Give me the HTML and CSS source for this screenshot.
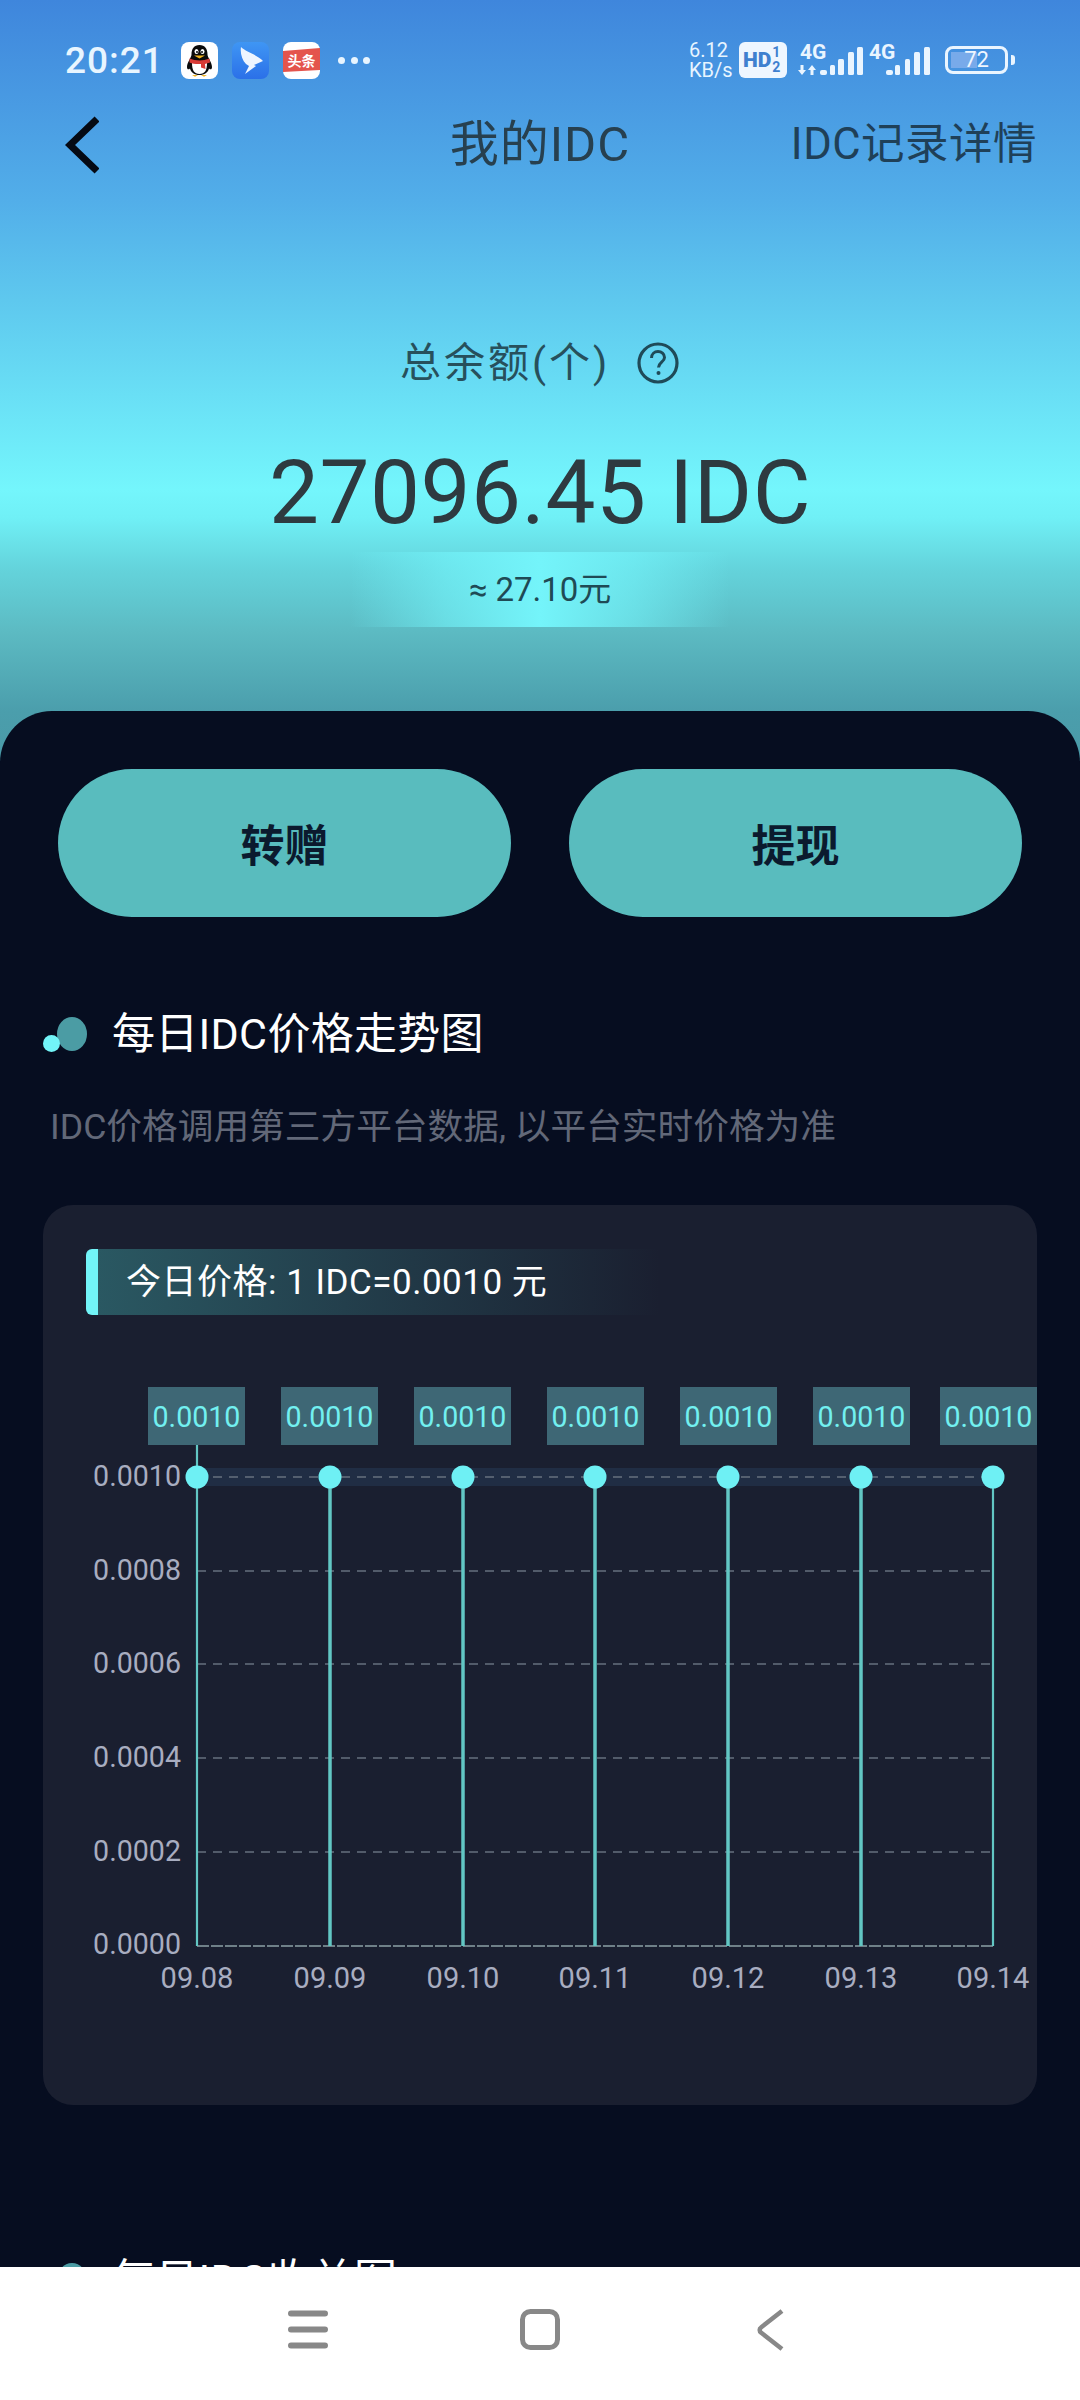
FILE: index.html
```html
<!DOCTYPE html>
<html lang="zh-CN">
<head>
<meta charset="utf-8">
<title>我的IDC</title>
<link rel="stylesheet" href="styles.css">
</head>
<body>
<div class="screen">
  <header class="hero">
    <div class="status">
      <div class="status-left">
        <span class="time">20:21</span>
        <svg class="app" viewBox="0 0 37 37"><rect width="37" height="37" rx="8" fill="#fff"/><path d="M18.500 3c-5.500 0-8 4-8 9.500 0 3-4.500 8-4.500 12.500 0 2.500 1.500 3 3 1.500 1 4 4.500 6.500 9.500 6.500s8.500-2.500 9.500-6.500c1.500 1.500 3 1 3-1.500 0-4.500-4.500-9.500-4.500-12.500 0-5.500-2.500-9.500-8-9.500z" fill="#0b0b0b"/><path d="M11 21c0 7 2 11 7.500 11s7.500-4 7.500-11z" fill="#fff"/><path d="M8.500 16.500c6.500 2.500 13.500 2.500 20 0l.5 4-5 1.500.5 5-4.500-1.500v-3.500c-4 .3-8 0-11.500-1.500z" fill="#d83a35"/><ellipse cx="15.500" cy="9.500" rx="2" ry="2.500" fill="#fff"/><ellipse cx="21.500" cy="9.500" rx="2" ry="2.500" fill="#fff"/><circle cx="16" cy="10" r="1" fill="#0b0b0b"/><circle cx="21" cy="10" r="1" fill="#0b0b0b"/><path d="M13 13.500h11l-5.500 3z" fill="#f2b51d"/><path d="M11 33h6l-3 1.800zM20 33h6l-3 1.800z" fill="#f2b51d"/></svg>
        <svg class="app" viewBox="0 0 37 37"><defs><linearGradient id="ding" x1="0" y1="0" x2="0" y2="1"><stop offset="0" stop-color="#3f96f4"/><stop offset="1" stop-color="#2b70e8"/></linearGradient></defs><rect width="37" height="37" rx="8" fill="url(#ding)"/><path d="M9 5C14 10 26 13 31 19L22 23l2 1L13 32l4-8-3-2C10 18 8 11 9 5z" fill="#eef5ff"/></svg>
        <svg class="app" viewBox="0 0 37 37"><rect width="37" height="37" rx="8" fill="#fff"/><path d="M0 9 37 6v22L0 30z" fill="#e4544d"/><text x="18.500" y="24" class="app-text">头条</text></svg>
        <span class="dots"><i></i><i></i><i></i></span>
      </div>
      <div class="status-right">
        <span class="speed"><b>6.12</b><b>KB/s</b></span>
        <span class="hd">HD<span class="hd-sims"><b>1</b><b>2</b></span></span>
        <svg class="signal sig1" viewBox="0 0 66 32"><text x="2" y="15" class="sig-text">4G</text><path d="M2.500 21h3v5H8l-4 5-4-5h2.500zM14 21l4 5h-2.500v5h-3v-5H10z" fill="#eaf5ff"/><rect x="22" y="26" width="7" height="5" rx="2" fill="#eaf5ff"/><rect x="32" y="21" width="5" height="10" rx="1.500" fill="#eaf5ff"/><rect x="40" y="15" width="6" height="16" rx="1.500" fill="#eaf5ff"/><rect x="50" y="8" width="6" height="23" rx="1.500" fill="#eaf5ff"/><rect x="59" y="3" width="6" height="28" rx="1.500" fill="#eaf5ff"/></svg>
        <svg class="signal sig2" viewBox="0 0 62 32"><text x="0" y="15" class="sig-text">4G</text><rect x="17" y="26" width="7" height="5" rx="2" fill="#eaf5ff"/><rect x="26" y="21" width="5" height="10" rx="1.500" fill="#eaf5ff"/><rect x="36" y="15" width="5" height="16" rx="1.500" fill="#eaf5ff"/><rect x="45" y="8" width="6" height="23" rx="1.500" fill="#eaf5ff"/><rect x="55" y="3" width="6" height="28" rx="1.500" fill="#eaf5ff"/></svg>
        <span class="battery"><span class="battery-fill"></span><span class="battery-num">72</span></span>
        <span class="battery-tip"></span>
      </div>
    </div>
    <nav class="topbar">
      <svg class="back" viewBox="0 0 34 58"><path d="M32 3 5 29l27 26" fill="none" stroke="#050a14" stroke-width="7"/></svg>
      <h1 class="page-title">我的IDC</h1>
      <a class="record-link">IDC记录详情</a>
    </nav>
    <div class="balance-label">
      <span>总余额(个)</span>
      <svg class="help" viewBox="0 0 42 42"><circle cx="21" cy="21" r="19" fill="none" stroke="#1f4a58" stroke-width="3.200"/><path d="M14.500 16c0-4 3-6.500 6.500-6.500s6.500 2.500 6.500 6c0 4.500-6 5-6 10" fill="none" stroke="#1f4a58" stroke-width="3"/><circle cx="21.500" cy="31" r="2" fill="#1f4a58"/></svg>
    </div>
    <div class="balance">27096.45 IDC</div>
    <div class="approx">≈ 27.10元</div>
  </header>

  <main class="panel">
    <div class="actions">
      <button class="action">转赠</button>
      <button class="action">提现</button>
    </div>

    <h2 class="section-title"><span class="blob"><i></i></span>每日IDC价格走势图</h2>
    <p class="section-note">IDC价格调用第三方平台数据, 以平台实时价格为准</p>

    <section class="card">
      <div class="today"><span class="today-text">今日价格: 1 IDC=0.0010 元</span></div>
      <svg class="chart" viewBox="0 27 994 703" width="994" height="703">
        <rect class="band" x="154" y="180" width="796" height="18"/>
        <g class="grid">
          <path d="M154 189H950M154 283H950M154 376H950M154 470H950M154 564H950"/>
        </g>
        <path class="axis" d="M154 658H950"/>
        <g class="stems">
          <path class="stem-edge" d="M154 150V658"/>
          <path d="M287 189V658M420 189V658M552 189V658M685 189V658M818 189V658"/>
          <path class="stem-edge" d="M950 189V658"/>
        </g>
        <g class="points">
          <circle cx="154" cy="189" r="11.500"/><circle cx="287" cy="189" r="11.500"/><circle cx="420" cy="189" r="11.500"/><circle cx="552" cy="189" r="11.500"/><circle cx="685" cy="189" r="11.500"/><circle cx="818" cy="189" r="11.500"/><circle cx="950" cy="189" r="11.500"/>
        </g>
        <g class="tips">
          <rect x="105" y="99" width="97" height="58"/><rect x="238" y="99" width="97" height="58"/><rect x="371" y="99" width="97" height="58"/><rect x="504" y="99" width="97" height="58"/><rect x="637" y="99" width="97" height="58"/><rect x="770" y="99" width="97" height="58"/><rect x="897" y="99" width="97" height="58"/>
        </g>
        <g class="tip-text">
          <text x="153.500" y="139">0.0010</text><text x="286.500" y="139">0.0010</text><text x="419.500" y="139">0.0010</text><text x="552.500" y="139">0.0010</text><text x="685.500" y="139">0.0010</text><text x="818.500" y="139">0.0010</text><text x="945.500" y="139">0.0010</text>
        </g>
        <g class="y-labels">
          <text x="138" y="198">0.0010</text><text x="138" y="292">0.0008</text><text x="138" y="385">0.0006</text><text x="138" y="479">0.0004</text><text x="138" y="573">0.0002</text><text x="138" y="666">0.0000</text>
        </g>
        <g class="x-labels">
          <text x="154" y="700">09.08</text><text x="287" y="700">09.09</text><text x="420" y="700">09.10</text><text x="552" y="700">09.11</text><text x="685" y="700">09.12</text><text x="818" y="700">09.13</text><text x="950" y="700">09.14</text>
        </g>
      </svg>
    </section>

    <h2 class="section-title next"><span class="blob"><i></i></span>每日IDC收益图</h2>
  </main>

  <footer class="navbar">
    <svg class="nav-icon" viewBox="0 0 40 41"><path d="M3 4.500H37M3 20.500H37M3 36.500H37" fill="none" stroke="#888" stroke-width="6" stroke-linecap="round"/></svg>
    <svg class="nav-icon" viewBox="0 0 40 41"><rect x="2.500" y="2.500" width="35" height="36" rx="8" fill="none" stroke="#888" stroke-width="5"/></svg>
    <svg class="nav-back" viewBox="0 0 28 42"><path d="M25 2 4 18.500a3 3 0 0 0 0 5L25 40" fill="none" stroke="#888" stroke-width="4.500"/></svg>
  </footer>
</div>
</body>
</html>
```
FILE: styles.css
```css
* { box-sizing: border-box; }
html, body { margin: 0; padding: 0; }
body {
  width: 1080px;
  height: 2400px;
  overflow: hidden;
  font-family: Roboto, "Noto Sans CJK SC", sans-serif;
}
.screen {
  position: relative;
  width: 1080px;
  height: 2400px;
  display: flex;
  flex-direction: column;
  overflow: hidden;
  background: #060d20;
}

/* Hero */
.hero {
  height: 761px;
  flex: none;
  padding: 0 43px 0 65px;
  display: flex;
  flex-direction: column;
  background: linear-gradient(180deg, #3f86dc 0, #52aee9 200px, #5ec8ee 300px, #74f6fc 490px, #70f0f6 517px, #64d4dc 567px, #5cbac2 633px, #4b9eac 711px, #4a9aa8 761px);
}
.status {
  height: 80px;
  padding: 40px 22px 0 0;
  display: flex;
  justify-content: space-between;
  align-items: center;
  flex: none;
}
.status-left, .status-right { display: flex; align-items: center; }
.time { color: #e8f5ff; font-size: 37px; font-weight: 500; letter-spacing: 1px; width: 116px; flex: none; }
.app { width: 37px; height: 37px; margin-right: 14px; display: block; flex: none; }
.app-text { font-size: 14px; font-weight: 700; fill: #fff; text-anchor: middle; font-family: "Noto Sans CJK SC", sans-serif; }
.dots { display: flex; gap: 5.500px; margin-left: 4px; }
.dots i { width: 7px; height: 7px; border-radius: 50%; background: #e8f5ff; display: block; }
.speed { display: flex; flex-direction: column; color: #e8f5ff; width: 50px; font-size: 20px; line-height: 20px; flex: none; }
.speed b { font-weight: 400; }
.hd {
  width: 48px; height: 36px; border-radius: 6px; background: #eef6ff; color: #3f80cf; flex: none;
  font-size: 21px; font-weight: 900; display: flex; align-items: center; padding-left: 4px; line-height: 1;
}
.hd-sims { display: flex; flex-direction: column; font-size: 14px; line-height: 15px; margin-left: 1px; }
.hd-sims b { font-weight: 700; }
.signal { height: 32px; display: block; overflow: visible; flex: none; }
.sig1 { width: 66px; margin-left: 11px; }
.sig2 { width: 62px; margin-left: 5px; }
.sig-text { font-size: 21px; font-weight: 700; fill: #eaf5ff; }
.battery {
  position: relative; width: 63px; height: 28px; border: 3px solid #eaf5ff; border-radius: 8px; margin-left: 14px; flex: none;
  display: flex; align-items: center; justify-content: center; overflow: hidden;
}
.battery-fill { position: absolute; left: 3px; top: 3px; bottom: 3px; width: 26px; background: #78aaea; }
.battery-num { position: relative; color: #eef6ff; font-size: 22px; line-height: 1; }
.battery-tip { width: 4px; height: 10px; border-radius: 0 3px 3px 0; background: #eaf5ff; margin-left: 3px; flex: none; }

.topbar {
  height: 130px;
  display: flex;
  align-items: center;
  justify-content: space-between;
  position: relative;
  flex: none;
}
.back { width: 34px; height: 58px; display: block; }
.page-title {
  position: absolute; left: 375px; margin: 0; width: 200px; text-align: center;
  font-size: 49px; letter-spacing: 1px; line-height: 60px; font-weight: 400; color: #27404f; white-space: nowrap;
}
.record-link { font-size: 43.500px; letter-spacing: .5px; line-height: 60px; color: #1f4058; white-space: nowrap; }

.balance-label {
  margin: 129px 0 0 335px;
  height: 48px;
  display: flex;
  align-items: center;
  font-size: 41px;
  letter-spacing: 3px;
  line-height: 48px;
  color: #27505c;
  flex: none;
}
.help { width: 42px; height: 42px; margin-left: 27px; display: block; }
.balance {
  margin: 48px 0 0 -65px;
  width: 1080px;
  text-align: center;
  font-size: 89px;
  letter-spacing: .5px;
  line-height: 116px;
  color: #2e3a40;
  flex: none;
}
.approx {
  margin: 1px 0 0 285px;
  width: 380px;
  height: 75px;
  text-align: center;
  font-size: 33px;
  line-height: 75px;
  color: #1f4a55;
  flex: none;
  background: linear-gradient(90deg, rgba(116,246,252,0) 0, rgba(116,246,252,.55) 25%, #74f4fa 50%, rgba(116,246,252,.55) 75%, rgba(116,246,252,0) 100%);
}

/* Panel */
.panel {
  flex: none;
  height: 1689px;
  margin-top: -50px;
  background: #060d20;
  border-radius: 52px 52px 0 0;
  padding: 58px 43px 0;
  position: relative;
}
.actions { display: flex; justify-content: space-between; padding: 0 15px; }
.action {
  width: 453px; height: 148px; border: 0; border-radius: 74px; background: #59bcbe;
  font-family: "Noto Sans CJK SC", sans-serif; font-size: 44px; font-weight: 700; color: #0b1a2e; padding: 0;
}
.section-title {
  margin: 87px 0 0;
  height: 60px;
  display: flex;
  align-items: center;
  font-size: 43px;
  letter-spacing: .3px;
  line-height: 60px;
  font-weight: 400;
  color: #fff;
}
.blob {
  position: relative; width: 30px; height: 34px; margin: 0 25px 0 14px; flex: none;
  border-radius: 50%;
  background: #4b9ca4;
}
.blob i {
  position: absolute; left: -14px; bottom: -1px; width: 17px; height: 17px; border-radius: 50%; background: #72f4f8;
}
.section-note {
  margin: 40px 0 0 7px;
  font-size: 35.700px;
  line-height: 46px;
  color: #626878;
  white-space: nowrap;
}
.card {
  margin-top: 55px;
  width: 994px;
  height: 900px;
  border-radius: 30px;
  background: #1a1f30;
  padding-top: 44px;
}
.today {
  margin-left: 43px;
  width: 574px;
  height: 66px;
  border-left: 12px solid #72f4f8;
  border-radius: 6px 0 0 6px;
  padding-left: 28px;
  line-height: 68px;
  font-size: 35px;
  letter-spacing: .5px;
  color: #fff;
  background: linear-gradient(90deg, #2a5862, rgba(42,88,98,0));
}
.today-text { white-space: nowrap; }
.chart { display: block; overflow: visible; }
.band { fill: #202d44; }
.grid path { stroke: #66707e; stroke-width: 1.500; stroke-dasharray: 9 7; fill: none; }
.axis { stroke: #6f8088; stroke-width: 2; stroke-dasharray: 12 2; fill: none; }
.stems path { stroke: #62c6c3; stroke-width: 3.500; fill: none; }
.stems .stem-edge { stroke-width: 2.200; }
.points circle { fill: #6ef0f4; }
.tips rect { fill: #3e6775; }
.tip-text text { fill: #72f0f0; font-size: 28.600px; text-anchor: middle; }
.y-labels text { fill: #a8adc0; font-size: 28.600px; text-anchor: end; }
.x-labels text { fill: #a8adc0; font-size: 29px; text-anchor: middle; }
.section-title.next { margin: 145px 0 0; }

/* Nav */
.navbar {
  height: 133px;
  position: absolute;
  left: 0;
  bottom: 0;
  width: 1080px;
  background: #fff;
  padding: 42px 0 0 288px;
  display: flex;
  align-items: flex-start;
  gap: 192px;
}
.nav-icon { width: 40px; height: 41px; display: block; }
.nav-back { width: 28px; height: 42px; display: block; margin-left: 5px; }
```
